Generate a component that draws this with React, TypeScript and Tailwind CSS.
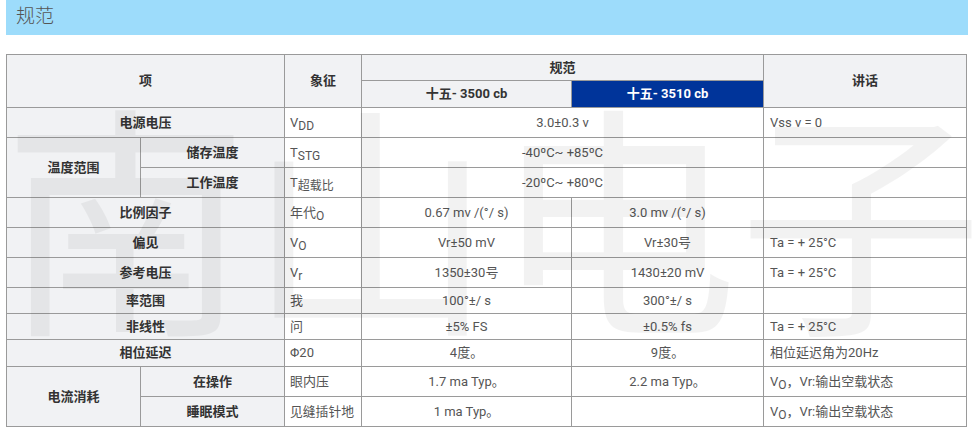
import React from 'react';

const bd = 'border border-[#9a9a9a]';
const th = `${bd} bg-[#f1f2f4] font-bold text-[#333] text-center`;
const lab = `${bd} bg-[#f1f2f4] font-bold text-[#333] text-center`;
const sym = `${bd} px-[5px] text-left text-[#555] whitespace-nowrap`;
const val = `${bd} text-center text-[#555]`;
const note = `${bd} px-[6px] text-left text-[#555]`;

const Sub = ({ children }: { children: React.ReactNode }) => (
  <sub className="text-[12px]">{children}</sub>
);

const App = () => {
  return (
    <div className="relative w-[974px] h-[434px] overflow-hidden bg-white px-[6px] font-['Roboto','Noto_Sans_CJK_SC',sans-serif] text-[13px]">
      {/* title bar */}
      <div className="h-[35px] bg-[#9ddcfb] flex items-center pl-[10px] text-[19px] font-light text-[#555]">
        规范
      </div>

      <table className="mt-[19px] w-[960px] table-fixed border-collapse">
        <colgroup>
          <col className="w-[134px]" />
          <col className="w-[144px]" />
          <col className="w-[77px]" />
          <col className="w-[210px]" />
          <col className="w-[192px]" />
          <col className="w-[203px]" />
        </colgroup>
        <thead>
          <tr className="h-[26px]">
            <th rowSpan={2} colSpan={2} className={th}>项</th>
            <th rowSpan={2} className={th}>象征</th>
            <th colSpan={2} className={th}>规范</th>
            <th rowSpan={2} className={th}>讲话</th>
          </tr>
          <tr className="h-[27px]">
            <th className={th}>十五- 3500 cb</th>
            <th className={`${bd} bg-[#00349a] font-bold text-white text-center`}>十五- 3510 cb</th>
          </tr>
        </thead>
        <tbody>
          <tr className="h-[30px]">
            <td colSpan={2} className={lab}>电源电压</td>
            <td className={sym}>V<Sub>DD</Sub></td>
            <td colSpan={2} className={val}>3.0±0.3 v</td>
            <td className={note}>Vss v = 0</td>
          </tr>
          <tr className="h-[30px]">
            <td rowSpan={2} className={lab}>温度范围</td>
            <td className={lab}>储存温度</td>
            <td className={sym}>T<Sub>STG</Sub></td>
            <td colSpan={2} className={val}>-40ºC~ +85ºC</td>
            <td className={note}></td>
          </tr>
          <tr className="h-[30px]">
            <td className={lab}>工作温度</td>
            <td className={sym}>T<Sub>超载比</Sub></td>
            <td colSpan={2} className={val}>-20ºC~ +80ºC</td>
            <td className={note}></td>
          </tr>
          <tr className="h-[30px]">
            <td colSpan={2} className={lab}>比例因子</td>
            <td className={sym}>年代<Sub>O</Sub></td>
            <td className={val}>0.67 mv /(°/ s)</td>
            <td className={val}>3.0 mv /(°/ s)</td>
            <td className={note}></td>
          </tr>
          <tr className="h-[30px]">
            <td colSpan={2} className={lab}>偏见</td>
            <td className={sym}>V<Sub>O</Sub></td>
            <td className={val}>Vr±50 mV</td>
            <td className={val}>Vr±30号</td>
            <td className={note}>Ta = + 25°C</td>
          </tr>
          <tr className="h-[30px]">
            <td colSpan={2} className={lab}>参考电压</td>
            <td className={sym}>V<Sub>r</Sub></td>
            <td className={val}>1350±30号</td>
            <td className={val}>1430±20 mV</td>
            <td className={note}>Ta = + 25°C</td>
          </tr>
          <tr className="h-[26px]">
            <td colSpan={2} className={lab}>率范围</td>
            <td className={sym}>我</td>
            <td className={val}>100°±/ s</td>
            <td className={val}>300°±/ s</td>
            <td className={note}></td>
          </tr>
          <tr className="h-[26px]">
            <td colSpan={2} className={lab}>非线性</td>
            <td className={sym}>问</td>
            <td className={val}>±5% FS</td>
            <td className={val}>±0.5% fs</td>
            <td className={note}>Ta = + 25°C</td>
          </tr>
          <tr className="h-[27px]">
            <td colSpan={2} className={lab}>相位延迟</td>
            <td className={sym}>Φ20</td>
            <td className={val}>4度。</td>
            <td className={val}>9度。</td>
            <td className={note}>相位延迟角为20Hz</td>
          </tr>
          <tr className="h-[30px]">
            <td rowSpan={2} className={lab}>电流消耗</td>
            <td className={lab}>在操作</td>
            <td className={sym}>眼内压</td>
            <td className={val}>1.7 ma Typ。</td>
            <td className={val}>2.2 ma Typ。</td>
            <td className={note}>V<Sub>O</Sub>，Vr:输出空载状态</td>
          </tr>
          <tr className="h-[30px]">
            <td className={lab}>睡眠模式</td>
            <td className={sym}>
              <span className="text-[12.8px]">见缝插针地</span>
            </td>
            <td className={val}>1 ma Typ。</td>
            <td className={val}></td>
            <td className={note}>V<Sub>O</Sub>，Vr:输出空载状态</td>
          </tr>
        </tbody>
      </table>

      {/* watermark */}
      <div className="pointer-events-none absolute left-[3px] top-[88px] whitespace-nowrap font-['Noto_Sans_CJK_SC',sans-serif] text-[245px] leading-none text-[#0000000d]">
        南山电子
      </div>
    </div>
  );
};

export default App;
